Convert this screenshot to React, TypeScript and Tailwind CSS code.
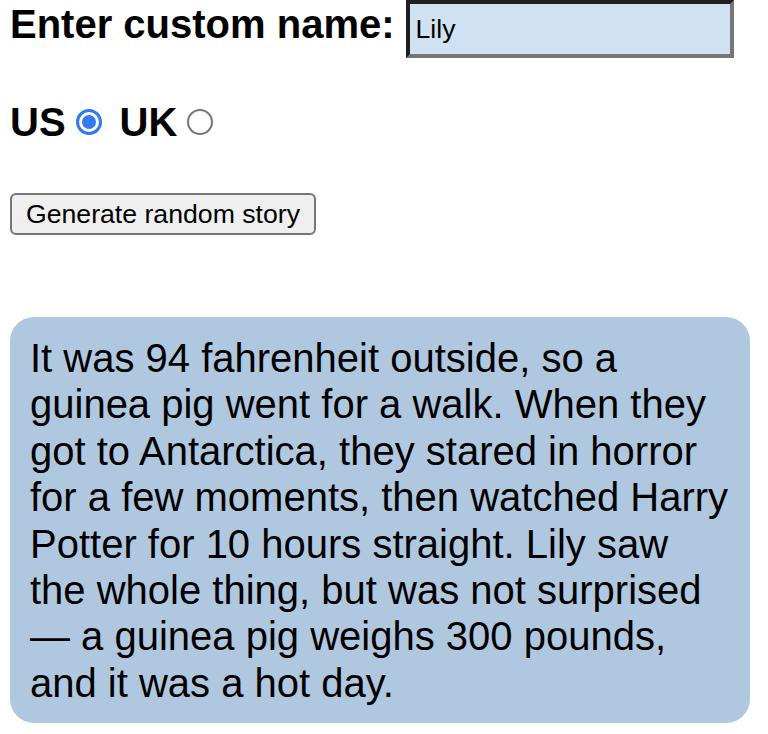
import { useState } from "react";

const story =
  "It was 94 fahrenheit outside, so a guinea pig went for a walk. When they got to Antarctica, they stared in horror for a few moments, then watched Harry Potter for 10 hours straight. Lily saw the whole thing, but was not surprised \u2014 a guinea pig weighs 300 pounds, and it was a hot day.";

function Radio({ checked, onClick }: { checked: boolean; onClick: () => void }) {
  return (
    <button
      type="button"
      onClick={onClick}
      className={
        checked
          ? "ml-[10px] mr-[6px] flex h-[26px] w-[26px] items-center justify-center rounded-full border-[3px] border-[#3478f6] bg-white"
          : "ml-[10px] mr-[6px] flex h-[26px] w-[26px] items-center justify-center rounded-full border-2 border-[#767676] bg-white"
      }
    >
      {checked && <span className="h-[14px] w-[14px] rounded-full bg-[#3478f6]" />}
    </button>
  );
}

export default function App() {
  const [name, setName] = useState("Lily");
  const [country, setCountry] = useState("us");

  return (
    <div className="min-h-[734px] bg-white pl-[10px] pr-[18px] text-black font-['Liberation_Sans',Arial,sans-serif]">
      {/* name row */}
      <div className="flex items-start">
        <label className="pt-[1px] text-[40px] font-bold leading-[46px]">Enter custom name:</label>
        <input
          value={name}
          onChange={(e) => setName(e.target.value)}
          className="ml-[11px] h-[58px] w-[328px] border-4 border-t-[#1f1f1f] border-l-[#1f1f1f] border-r-[#767676] border-b-[#767676] bg-[#d0e2f2] px-[6px] text-[26.67px] outline-none"
        />
      </div>

      {/* country */}
      <div className="mt-[41px] flex h-[46px] items-center text-[40px] font-bold">
        <span>US</span>
        <Radio checked={country === "us"} onClick={() => setCountry("us")} />
        <span className="ml-[12px]">UK</span>
        <Radio checked={country === "uk"} onClick={() => setCountry("uk")} />
      </div>

      <button
        type="button"
        className="mt-[48px] flex h-[42px] w-[306px] items-center justify-center rounded-[6px] border-2 border-[#767676] bg-[#efefef] text-[26.67px]"
      >
        Generate random story
      </button>

      <div className="mt-[82px] w-[740px] rounded-[24px] bg-[#b0c8df] px-[20px] pt-[18px] pb-[17px]">
        <p className="text-[40px] leading-[46.4px]">{story}</p>
      </div>
    </div>
  );
}
